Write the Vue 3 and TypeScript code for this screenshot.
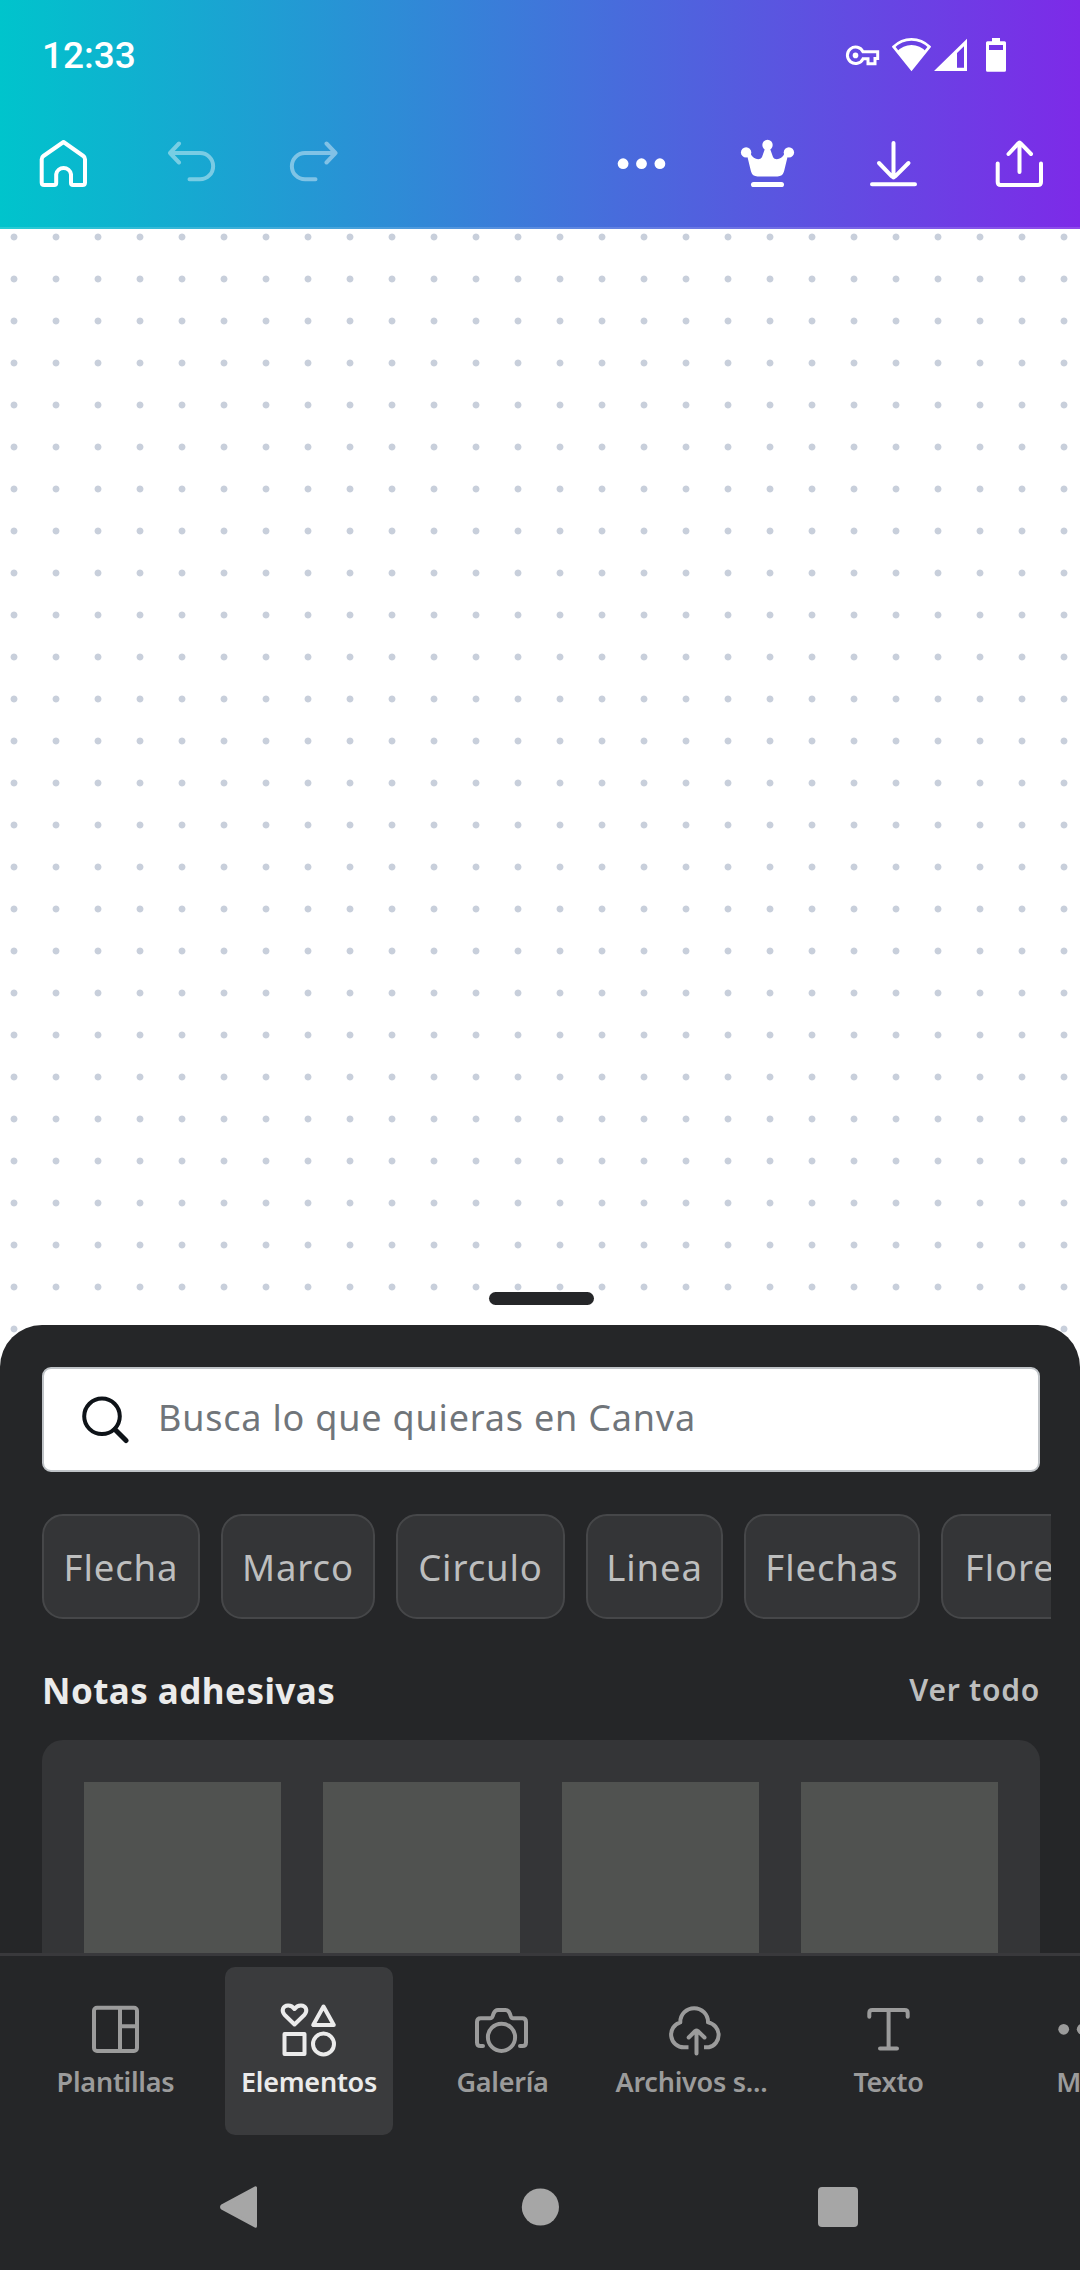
<script setup lang="ts">
interface Chip {
  label: string
  width: number
}

interface Tab {
  id: string
  label: string
}

const chips: Chip[] = [
  { label: 'Flecha', width: 158 },
  { label: 'Marco', width: 154 },
  { label: 'Circulo', width: 169 },
  { label: 'Linea', width: 137 },
  { label: 'Flechas', width: 176 },
  { label: 'Flores', width: 156 },
]

const tabs: Tab[] = [
  { id: 'templates', label: 'Plantillas' },
  { id: 'elements', label: 'Elementos' },
  { id: 'gallery', label: 'Galería' },
  { id: 'uploads', label: 'Archivos s...' },
  { id: 'text', label: 'Texto' },
  { id: 'more', label: 'Más' },
]

const activeTab = 'elements'
</script>

<template>
  <div class="screen">
    <header class="top">
      <div class="status">
        <span class="time">12:33</span>
        <svg class="status-icons" viewBox="0 0 170 40" fill="#fff">
          <path d="M21 16.8A8.200 8.200 0 1 0 21 23.800H26V28.800H33V23.500H35.700V16.800Z" fill="none" stroke="#fff" stroke-width="3" />
          <circle cx="13.500" cy="20.400" r="2.800" />
          <path d="M51.700 11.800A25 25 0 0 1 87.300 11.800L69.500 34Z" fill="none" stroke="#fff" stroke-width="2.800" />
          <path d="M55 16.500A19.500 19.500 0 0 1 84 16.500L69.500 35Z" />
          <path fill-rule="evenodd" d="M92 36L125 3.700V36ZM115 32.800H122V11.200L115 18Z" />
          <path fill-rule="evenodd" d="M150 3H158V6.300H162.500Q164 6.300 164 7.800V35.200Q164 36.700 162.500 36.700H145.500Q144 36.700 144 35.200V7.800Q144 6.300 145.500 6.300H150ZM147 10V15H161V10Z" />
        </svg>
      </div>
      <nav class="toolbar">
        <svg class="icon home" viewBox="0 0 63 63">
          <path d="M31.500 10L51.300 24Q53 25.200 53 27.200V50.500Q53 53 50.500 53H41Q39 53 39 51V42.300A7.500 7.500 0 0 0 24.200 42.300V51Q24.200 53 22.200 53H12.200Q9.700 53 9.700 50.500V27.200Q9.700 25.200 11.400 24Z" />
        </svg>
        <svg class="icon undo" viewBox="0 0 63 63">
          <path d="M19 11.500L10 21L19 30.500M10 21H40A13.150 13.150 0 0 1 40 47.300H29.500" />
        </svg>
        <svg class="icon redo" viewBox="0 0 63 63">
          <path d="M44.500 11.500L53.500 21L44.500 30.500M53.500 21H23A13.150 13.150 0 0 0 23 47.300H33.500" />
        </svg>
        <svg class="icon solid push" viewBox="0 0 63 63">
          <circle cx="13.100" cy="31.700" r="5.400" />
          <circle cx="31.500" cy="31.700" r="5.400" />
          <circle cx="49.900" cy="31.700" r="5.400" />
        </svg>
        <svg class="icon solid" viewBox="0 0 63 63">
          <circle cx="10.100" cy="20.400" r="5.200" />
          <circle cx="31.500" cy="13" r="5.200" />
          <circle cx="52.900" cy="20.400" r="5.200" />
          <path d="M11 23L14.500 21.500C17 27.500 24 29 26 25L29.200 16H33.800L37 25C39 29 46 27.500 48.500 21.500L52 23L48 39.500Q46.600 44.400 41.500 44.400H21.500Q16.400 44.400 15 39.500Z" />
          <rect x="15" y="49.900" width="33" height="5.200" rx="2.600" />
        </svg>
        <svg class="icon" viewBox="0 0 63 63">
          <path d="M31.500 11V45.500M17 31L29.800 44.400Q31.500 46 33.200 44.400L46.500 31M10 52.300H53" />
        </svg>
        <svg class="icon" viewBox="0 0 63 63">
          <path d="M9.700 31.500V50Q9.700 53 12.700 53H50Q53 53 53 50V31.500M31.500 10.500V40M20.500 22L30.300 11.400Q31.500 10.200 32.700 11.400L43 22" />
        </svg>
      </nav>
    </header>

    <main class="canvas">
      <div class="handle"></div>
    </main>

    <section class="sheet">
      <div class="search">
        <svg class="search-icon" viewBox="0 0 50 50">
          <circle cx="22" cy="22.300" r="17.800" stroke-width="4" />
          <path d="M35 35.500L46 46.500" stroke-width="5" />
        </svg>
        <span class="placeholder">Busca lo que quieras en Canva</span>
      </div>

      <div class="chips">
        <button v-for="chip in chips" :key="chip.label" class="chip" :style="{ width: chip.width + 'px' }">
          {{ chip.label }}
        </button>
      </div>

      <div class="heading">
        <h2>Notas adhesivas</h2>
        <a>Ver todo</a>
      </div>

      <div class="panel">
        <div v-for="n in 4" :key="n" class="tile"></div>
      </div>
    </section>

    <nav class="tabs">
      <div v-for="tab in tabs" :key="tab.id" class="tab" :class="[tab.id, { active: tab.id === activeTab }]">
        <svg class="tab-icon" viewBox="0 0 63 63">
          <template v-if="tab.id === 'templates'">
            <rect x="10" y="9.700" width="43" height="43.300" rx="3" />
            <path d="M36 10V53M36 28.200H53" />
          </template>
          <template v-else-if="tab.id === 'elements'">
            <path d="M16.500 26.500L6.500 16.700C3 12.500 5 7.600 10 7.400C12.800 7.300 15 8.800 16.500 11C18 8.800 20.200 7.300 23 7.400C28 7.600 30 12.500 26.500 16.700Z" />
            <path d="M45.500 8.500L35.200 27H55.800Z" />
            <rect x="6.500" y="36" width="20" height="20" />
            <circle cx="45.500" cy="46" r="10.500" />
          </template>
          <template v-else-if="tab.id === 'gallery'">
            <path d="M12 48H9.500Q6 48 6 44.500V24Q6 20.300 9.700 20.300H19Q21 20.300 21.600 18.300L22.600 15.500Q24 12 27 12H34.500Q37.500 12 38.800 15.500L39.800 18.300Q40.500 20.300 42 20.300H51.500Q55 20.300 55 24V44.500Q55 48 51.500 48H49" />
            <circle cx="30.500" cy="39.300" r="13.600" />
          </template>
          <template v-else-if="tab.id === 'uploads'">
            <path class="butt" d="M23.500 49.300H18.800A12.700 12.700 0 0 1 15.300 24.400V24A13.800 13.800 0 0 1 43 24V24.400A12.700 12.700 0 0 1 43.800 49.300H39" />
            <path d="M31.500 55.500V33M23.700 39.500L30.200 33Q31.500 32 32.800 33L39.500 39.500" />
          </template>
          <template v-else-if="tab.id === 'text'">
            <path d="M11.300 18.800V15Q11.300 12 14.300 12H46.700Q49.700 12 49.700 15V18.800M30.600 12V50.600M22 50.600H39" />
          </template>
          <template v-else>
            <g class="dots">
              <circle cx="11.700" cy="31.300" r="5.400" />
              <circle cx="30.200" cy="31.300" r="5.400" />
              <circle cx="48.700" cy="31.300" r="5.400" />
            </g>
          </template>
        </svg>
        <span class="tab-label">{{ tab.label }}</span>
      </div>
    </nav>

    <footer class="system">
      <svg viewBox="0 0 42 46">
        <path d="M4.500 21.500L37.500 3.800V42.200L4.500 24.500Q2.500 23 4.500 21.500Z" stroke="#a6a6a6" stroke-width="3" stroke-linejoin="round" />
      </svg>
      <svg viewBox="0 0 42 46"><circle cx="22.400" cy="23" r="18.600" /></svg>
      <svg viewBox="0 0 42 46"><rect x="1" y="3" width="40" height="40" rx="4" /></svg>
    </footer>
  </div>
</template>

<style>
body {
  margin: 0;
  overflow: hidden;
}
</style>

<style scoped>
.screen {
  width: 1080px;
  height: 2270px;
  display: flex;
  flex-direction: column;
  overflow: hidden;
  background: #252628;
  font-family: 'Noto Sans', 'Open Sans', sans-serif;
}

.top {
  box-sizing: border-box;
  height: 229px;
  flex: none;
  background: linear-gradient(90deg, #00c4cc, #7d2ae8);
  background-origin: border-box;
  border-bottom: 2px solid rgba(255, 255, 255, 0.15);
}

.status {
  height: 97px;
  padding: 35px 68px 0 42px;
  display: flex;
  justify-content: space-between;
  box-sizing: border-box;
}

.time {
  font-family: Roboto, sans-serif;
  font-size: 37px;
  font-weight: 500;
  line-height: 42px;
  color: #fff;
}

.status-icons {
  width: 170px;
  height: 40px;
}

.toolbar {
  display: flex;
  padding: 35px 29px 0 32px;
}

.icon {
  width: 63px;
  height: 63px;
  margin-left: 63px;
  fill: none;
  stroke: #fff;
  stroke-width: 4;
  stroke-linecap: round;
  stroke-linejoin: round;
}

.home {
  margin-left: 0;
}

.undo {
  margin-left: 65px;
}

.redo {
  margin-left: 59px;
}

.undo,
.redo {
  opacity: 0.42;
}

.solid {
  fill: #fff;
  stroke: none;
}

.push {
  margin-left: auto;
}

/* The dotted canvas runs on behind the sheet's rounded corners. */
.canvas {
  box-sizing: border-box;
  height: 1138px;
  flex: none;
  display: flex;
  justify-content: center;
  align-items: flex-end;
  padding: 0 0 62px 3px;
  margin-bottom: -42px;
  background: #fff radial-gradient(circle, #c8cfdb 2.9px, rgba(200, 207, 219, 0) 3.9px) -7px -13px / 42px 42px;
}

.handle {
  width: 105px;
  height: 13px;
  border-radius: 7px;
  background: #252628;
}

.sheet {
  box-sizing: border-box;
  height: 628px;
  flex: none;
  padding: 42px 40px 0 42px;
  border-radius: 42px 42px 0 0;
  background: #252628;
  overflow: hidden;
}

.search {
  box-sizing: border-box;
  height: 105px;
  display: flex;
  align-items: center;
  padding-left: 36px;
  border: 2px solid #bfc3c7;
  border-radius: 9px;
  background: #fff;
}

.search-icon {
  width: 50px;
  height: 50px;
  margin-right: 28px;
  margin-bottom: 2px;
  fill: none;
  stroke: #0e1318;
  stroke-linecap: round;
}

.placeholder {
  padding-bottom: 5px;
  font-size: 36px;
  letter-spacing: 0.8px;
  color: #70757a;
  white-space: nowrap;
}

.chips {
  display: flex;
  gap: 21px;
  margin: 42px -11px 0 0;
  overflow: hidden;
}

.chip {
  box-sizing: border-box;
  flex: none;
  height: 105px;
  padding: 0;
  border: 2px solid #464749;
  border-radius: 21px;
  background: #343537;
  color: #bdbebe;
  font: inherit;
  font-size: 36.5px;
  letter-spacing: 0.9px;
  white-space: nowrap;
}

.heading {
  display: flex;
  justify-content: space-between;
  align-items: baseline;
  height: 121px;
  padding-top: 47px;
  box-sizing: border-box;
}

h2 {
  margin: 0;
  font-size: 35px;
  font-weight: 700;
  letter-spacing: 0.45px;
  line-height: 50px;
  color: #ebebeb;
}

.heading a {
  position: relative;
  top: -3px;
  font-size: 30px;
  font-weight: 600;
  letter-spacing: 0.75px;
  color: #bdbebe;
}

.panel {
  display: flex;
  gap: 42px;
  height: 240px;
  padding: 42px;
  box-sizing: border-box;
  border-radius: 21px 21px 0 0;
  background: #343537;
}

.tile {
  width: 197px;
  height: 198px;
  flex: none;
  background: #505250;
}

.tabs {
  box-sizing: border-box;
  height: 193px;
  flex: none;
  display: flex;
  gap: 25.5px;
  padding: 11px 0 0 31.5px;
  border-top: 3px solid #39393c;
  background: #252628;
}

.tab {
  width: 168px;
  height: 168px;
  flex: none;
  display: flex;
  flex-direction: column;
  align-items: center;
  padding-top: 31px;
  box-sizing: border-box;
  border-radius: 10px;
  color: #9b9b9b;
}

.tab.active {
  background: #3a3b3d;
  color: #ebebeb;
}

.tab-icon {
  width: 63px;
  height: 63px;
  flex: none;
  fill: none;
  stroke: currentColor;
  stroke-width: 4;
  stroke-linecap: round;
  stroke-linejoin: round;
}

.butt {
  stroke-linecap: butt;
}

.dots {
  fill: currentColor;
  stroke: none;
}

.tab-label {
  margin-top: 2px;
  font-size: 27px;
  font-weight: 600;
  letter-spacing: -0.25px;
  line-height: 38px;
  white-space: nowrap;
}

.uploads .tab-label {
  margin-left: -9px;
}

.text .tab-label {
  margin-left: -2px;
}

.system {
  flex: 1;
  display: flex;
  justify-content: space-between;
  padding: 38px 221px 0 218px;
}

.system svg {
  width: 42px;
  height: 46px;
  fill: #a6a6a6;
}
</style>
